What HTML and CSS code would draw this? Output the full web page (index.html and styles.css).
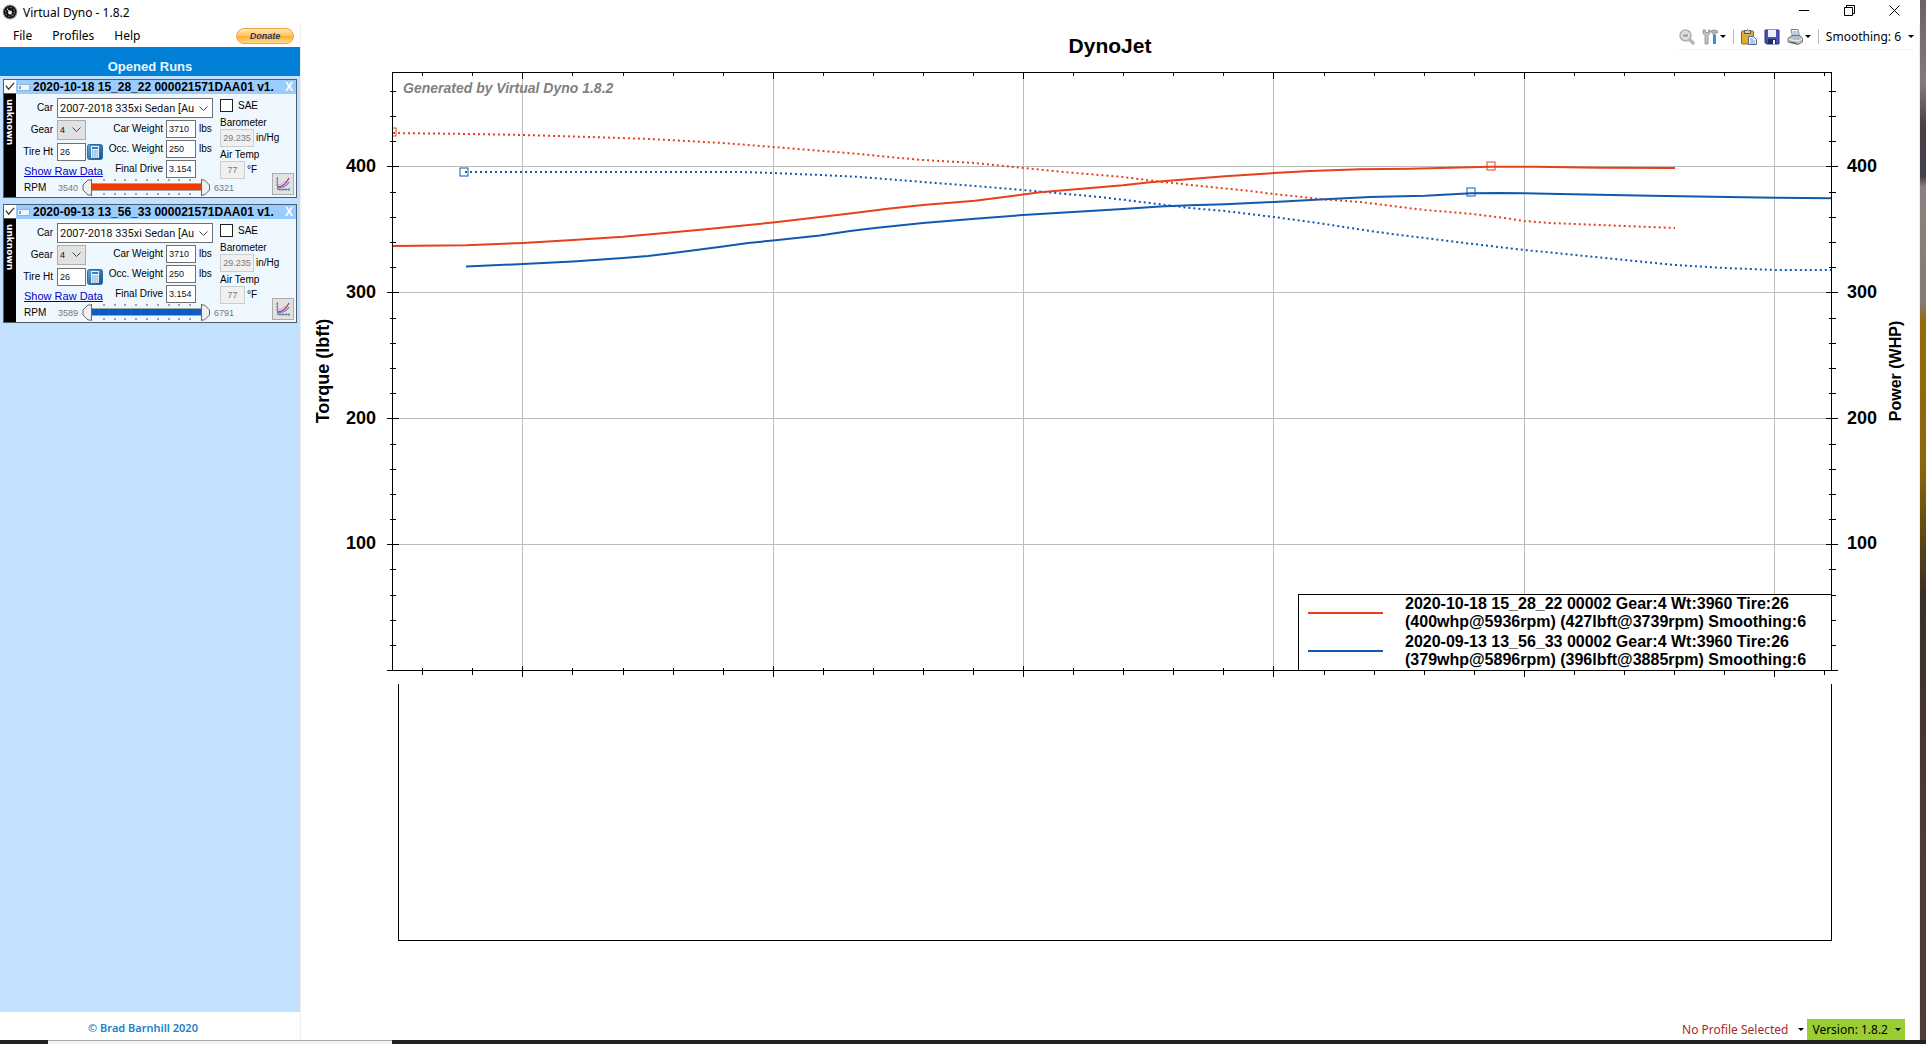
FILE: index.html
```html
<!DOCTYPE html>
<html lang="en">
<head>
<meta charset="utf-8">
<title>Virtual Dyno - 1.8.2</title>
<link rel="stylesheet" href="styles.css">
</head>
<body>
<svg class="defs" aria-hidden="true">
  <defs>
    <linearGradient id="calc-face" x1="0" y1="0" x2="1" y2="1"><stop offset="0" stop-color="#5fa8dc"/><stop offset="1" stop-color="#0d4f94"/></linearGradient>
    <symbol id="i-check" viewBox="0 0 13 13"><path d="M2 6l3 4 6-7" fill="none" stroke="#333" stroke-width="1.3"/></symbol>
    <symbol id="i-tag" viewBox="0 0 13 7"><rect x=".5" y=".5" width="12" height="6" fill="#eef6ff" stroke="#8fb4d8"/><rect x="2" y="2" width="2" height="3" fill="#6fa3d4"/></symbol>
    <symbol id="i-calc" viewBox="0 0 16 16"><rect x=".5" y=".5" width="15" height="15" rx="2" fill="url(#calc-face)" stroke="#2b6ba8"/><rect x="4" y="2" width="8" height="12" fill="#e6f2fb"/><path d="M5 4h6" stroke="#3b7fb8" stroke-width="2"/><path d="M5 7h6M5 9h6M5 11h6M5 13h6" stroke="#4a8fc8" stroke-dasharray="1.4 .9"/></symbol>
    <symbol id="i-graph" viewBox="0 0 16 16"><path d="M2.500 1v12.500H15M1 3h2M1 6h2M1 9h2M5 12v3M8 12v3M11 12v3M14 12v3" fill="none" stroke="#7c8494"/><path d="M3 11c5 0 8-3 11-9" fill="none" stroke="#c0306a" stroke-width="1.300"/><path d="M3 12c5-1 8-1 11-6" fill="none" stroke="#5a8ae8" stroke-width="1.300"/><path d="M3 9c4 0 5-3 8-4" fill="none" stroke="#d79ad8"/></symbol>
    <symbol id="i-down" viewBox="0 0 6 3"><path d="M0 0h6L3 3z"/></symbol>
    <symbol id="range" viewBox="0 0 129 18">
      <path d="M22 0v2M33 0v2M43 0v2M54 0v2M65 0v2M76 0v2M87 0v2M97 0v2M108 0v2M22 14v2M33 14v2M43 14v2M54 14v2M65 14v2M76 14v2M87 14v2M97 14v2M108 14v2" stroke="#555"/>
      <path d="M10 5h110M10 11h110" stroke="#555"/><path d="M10 8h110" stroke="currentColor" stroke-width="6"/>
      <path d="M9.500 0v17M9.500 1H6L1 6v5l5 5h3" fill="#f0f0f0" stroke="#666"/>
      <path d="M119.500 0v17M119.500 1h3l5 5v5l-5 5h-3" fill="#f0f0f0" stroke="#666"/>
    </symbol>
  </defs>
</svg>

<div class="app">
  <header class="titlebar">
    <svg class="logo" viewBox="0 0 16 16" aria-hidden="true"><circle cx="8" cy="8" r="7.500" fill="#aaa"/><circle cx="8" cy="8" r="6.500" fill="#151515"/><circle cx="8" cy="8" r="4.500" fill="none" stroke="#999" stroke-dasharray="1.500 2"/><path d="M8 8L5 5" stroke="#ddd"/><circle cx="8" cy="8.500" r="2" fill="#eee"/><path d="M9 11h3" stroke="#e33"/></svg>
    <h1>Virtual Dyno - 1.8.2</h1>
    <div class="controls">
      <button aria-label="Minimize"><svg viewBox="0 0 11 11"><path d="M0 5.500h10"/></svg></button>
      <button aria-label="Restore"><svg viewBox="0 0 11 11"><path d="M.5 2.500h8v8h-8zM2.500 2V.5h8v8H9"/></svg></button>
      <button aria-label="Close"><svg viewBox="0 0 11 11"><path d="M.5.5l10 10M10.500.5l-10 10"/></svg></button>
    </div>
  </header>

  <div class="content">
    <aside class="sidebar">
      <nav class="menu">
        <button>File</button><button>Profiles</button><button>Help</button>
        <button class="donate">Donate</button>
      </nav>
      <h2>Opened Runs</h2>
      <div class="runs">

        <section class="run">
          <header class="run-head">
            <label class="tick"><input type="checkbox" checked aria-label="Show run"><svg><use href="#i-check"/></svg></label>
            <svg class="tag-icon"><use href="#i-tag"/></svg>
            <h3>2020-10-18 15_28_22 000021571DAA01 v1.</h3>
            <button class="close" aria-label="Close run">X</button>
          </header>
          <div class="run-body">
            <div class="strip">unknown</div>
            <div class="settings">
              <div class="car"><label for="car1">Car</label><select id="car1" class="wide"><option>2007-2018 335xi Sedan [Automatic]</option></select></div>
              <div class="columns">
                <div class="gearing">
                  <div class="row"><label for="gear1">Gear</label><select id="gear1" class="gear"><option>4</option></select></div>
                  <div class="row"><label for="tire1">Tire Ht</label><input id="tire1" value="26"><button class="calc" aria-label="Tire calculator"><svg><use href="#i-calc"/></svg></button></div>
                  <a href="#raw1">Show Raw Data</a>
                </div>
                <div class="weights">
                  <label for="cw1">Car Weight</label><input id="cw1" value="3710"><span>lbs</span>
                  <label for="ow1">Occ. Weight</label><input id="ow1" value="250"><span>lbs</span>
                  <label for="fd1">Final Drive</label><input id="fd1" value="3.154">
                </div>
              </div>
              <div class="rpm"><span>RPM</span><output>3540</output>
                <div class="slider red"><svg><use href="#range"/></svg><input type="range" aria-label="Lowest RPM"><input type="range" aria-label="Highest RPM"></div>
                <output>6321</output></div>
            </div>
            <div class="weather">
              <div class="readings">
                <label class="sae"><input type="checkbox">SAE</label>
                <label for="baro1">Barometer</label>
                <div class="reading"><input id="baro1" class="baro" value="29.235" disabled><span>in/Hg</span></div>
                <label for="air1">Air Temp</label>
                <div class="reading"><input id="air1" class="air" value="77" disabled><span>°F</span></div>
              </div>
              <button class="graph" aria-label="Run graph"><svg><use href="#i-graph"/></svg></button>
            </div>
          </div>
        </section>

        <section class="run">
          <header class="run-head">
            <label class="tick"><input type="checkbox" checked aria-label="Show run"><svg><use href="#i-check"/></svg></label>
            <svg class="tag-icon"><use href="#i-tag"/></svg>
            <h3>2020-09-13 13_56_33 000021571DAA01 v1.</h3>
            <button class="close" aria-label="Close run">X</button>
          </header>
          <div class="run-body">
            <div class="strip">unknown</div>
            <div class="settings">
              <div class="car"><label for="car2">Car</label><select id="car2" class="wide"><option>2007-2018 335xi Sedan [Automatic]</option></select></div>
              <div class="columns">
                <div class="gearing">
                  <div class="row"><label for="gear2">Gear</label><select id="gear2" class="gear"><option>4</option></select></div>
                  <div class="row"><label for="tire2">Tire Ht</label><input id="tire2" value="26"><button class="calc" aria-label="Tire calculator"><svg><use href="#i-calc"/></svg></button></div>
                  <a href="#raw2">Show Raw Data</a>
                </div>
                <div class="weights">
                  <label for="cw2">Car Weight</label><input id="cw2" value="3710"><span>lbs</span>
                  <label for="ow2">Occ. Weight</label><input id="ow2" value="250"><span>lbs</span>
                  <label for="fd2">Final Drive</label><input id="fd2" value="3.154">
                </div>
              </div>
              <div class="rpm"><span>RPM</span><output>3589</output>
                <div class="slider blue"><svg><use href="#range"/></svg><input type="range" aria-label="Lowest RPM"><input type="range" aria-label="Highest RPM"></div>
                <output>6791</output></div>
            </div>
            <div class="weather">
              <div class="readings">
                <label class="sae"><input type="checkbox">SAE</label>
                <label for="baro2">Barometer</label>
                <div class="reading"><input id="baro2" class="baro" value="29.235" disabled><span>in/Hg</span></div>
                <label for="air2">Air Temp</label>
                <div class="reading"><input id="air2" class="air" value="77" disabled><span>°F</span></div>
              </div>
              <button class="graph" aria-label="Run graph"><svg><use href="#i-graph"/></svg></button>
            </div>
          </div>
        </section>
      </div>
      <footer class="credit">© Brad Barnhill 2020</footer>
    </aside>

    <main class="main">
      <div class="main-head">
        <h2>DynoJet</h2>
        <div class="toolbar">
          <button aria-label="Zoom out"><svg class="icon" viewBox="0 0 16 16"><path d="M10 10l4 4" stroke="#b5b5b5" stroke-width="3.500" stroke-linecap="round"/><circle cx="6.500" cy="6.500" r="5.500" fill="#ddd" stroke="#b0b0b0" stroke-width="1.500"/><path d="M4 6.500h5" stroke="#999" stroke-width="2"/></svg></button>
          <button class="tools" aria-label="Tools"><svg class="icon" viewBox="0 0 16 16"><path d="M1 1v3.500L3 6.500V15h3V6.500l2-2V1L6.500 1v2.500h-3V1z" fill="#c4c8cc" stroke="#85898d" stroke-width=".8"/><path d="M8.500 2.500Q11-.5 15.500 2v2H13v2h-2V4z" fill="#b4b8bc" stroke="#75797d" stroke-width=".6"/><path d="M11 6h3v9h-3z" fill="#2196f3"/></svg><svg class="down"><use href="#i-down"/></svg></button>
          <i class="sep"></i>
          <button aria-label="Paste"><svg class="icon" viewBox="0 0 16 16"><rect x=".5" y="2" width="12" height="13" rx="1" fill="#e3ac2c" stroke="#916414"/><path d="M3.500 4.500v-3h2l1-1 1 1h2v3z" fill="#c8ccd2" stroke="#555"/><path d="M7.500 7.500h5l3 3v5h-8z" fill="#f2f7ff" stroke="#51698e"/><path d="M9 10h3M9 12h5M9 14h5" stroke="#7898c4"/></svg></button>
          <button aria-label="Save"><svg class="icon" viewBox="0 0 16 16"><path d="M1 1h14v14H2.500L1 13.500z" fill="#4550b8" stroke="#29307c"/><path d="M4 1h8v7H4z" fill="#edf1fb"/><path d="M4 10h8v5H4z" fill="#262b5c"/><path d="M9 11h2v4H9z" fill="#fff"/></svg></button>
          <button class="print" aria-label="Print"><svg class="icon" viewBox="0 0 16 16"><path d="M4 .5h7l1.500 7h-7z" fill="#f3f7ff" stroke="#7d8799"/><path d="M5.500 3h5M6 5h5" stroke="#87a3d3"/><path d="M1 9.500l4-3h8l2.500 3V13L11 15.500 1 13z" fill="#b9bdc3" stroke="#6f747c"/><path d="M2 10.500l9 1.500 4-2" fill="none" stroke="#f5f5f5"/><path d="M3 13l7 1.500" stroke="#555"/></svg><svg class="down"><use href="#i-down"/></svg></button>
          <i class="sep"></i>
          <button class="smoothing">Smoothing: 6<svg class="down"><use href="#i-down"/></svg></button>
        </div>
      </div>

      <svg class="chart" viewBox="301 62 1618 890" role="img" aria-label="Torque and power against engine speed">
        <clipPath id="plot"><rect x="393" y="72" width="1439" height="599"/></clipPath>
        <g class="lines" transform="translate(.5 .5)">
          <path class="grid" d="M393 166H1831M393 292H1831M393 418H1831M393 544H1831M522 72V670M773 72V670M1023 72V670M1273 72V670M1524 72V670M1774 72V670"/>
          <path d="M392 72H1831V670H392z"/>
          <path d="M386 166h12M386 292h12M386 418h12M386 544h12M386 670h12M1825 166h12M1825 292h12M1825 418h12M1825 544h12M1825 670h12"/>
          <path d="M389 91h6m-6 25h6m-6 25h6M389 192h6m-6 25h6m-6 25h6m-6 25h6M389 318h6m-6 25h6m-6 25h6m-6 25h6M389 444h6m-6 25h6m-6 25h6m-6 25h6M389 569h6m-6 26h6m-6 25h6m-6 25h6"/>
          <path d="M1828 91h7m-7 25h7m-7 25h7M1828 192h7m-7 25h7m-7 25h7m-7 25h7M1828 318h7m-7 25h7m-7 25h7m-7 25h7M1828 444h7m-7 25h7m-7 25h7m-7 25h7M1828 569h7m-7 26h7m-7 25h7m-7 25h7"/>
          <path d="M522 72v6M773 72v6M1023 72v6M1273 72v6M1524 72v6M1774 72v6M522 665v11M773 665v11M1023 665v11M1273 665v11M1524 665v11M1774 665v11"/>
          <path d="M422 72v3m50-3v3m100-3v3m51-3v3m50-3v3m50-3v3m100-3v3m50-3v3m50-3v3m50-3v3m100-3v3m50-3v3m50-3v3m50-3v3m101-3v3m50-3v3m50-3v3m50-3v3m100-3v3m50-3v3m50-3v3m50-3v3m100-3v3"/>
          <path d="M422 667v7m50-7v7m100-7v7m51-7v7m50-7v7m50-7v7m100-7v7m50-7v7m50-7v7m50-7v7m100-7v7m50-7v7m50-7v7m50-7v7m101-7v7m50-7v7m50-7v7m50-7v7m100-7v7m50-7v7m50-7v7m50-7v7m100-7v7"/>
          <path d="M398 683V940H1831V683"/>
        </g>
        <g class="curves" clip-path="url(#plot)">
          <polyline class="red dots" points="393,133 470,134 523,135 590,137 650,139 723,143 773,147 860,154 900,158 923,160 975,163 1023,168 1075,173 1123,177 1155,181 1200,186 1250,191 1274,194 1320,199 1360,202 1400,207 1425,210 1473,214 1505,218 1524,221 1550,223 1600,225 1650,227 1675,228"/>
          <polyline class="blue dots" points="465,172 740,172 773,173 820,175 860,177 923,182 975,186 1023,190 1100,197 1150,203 1190,208 1225,211 1274,217 1325,224 1370,231 1400,235 1425,238 1473,244 1524,250 1575,255 1625,260 1675,265 1725,268 1775,270 1831,270"/>
          <polyline class="blue" points="466,266.500 523,264 573,261.500 623,258 648,256 673,253 723,246.500 748,243 773,240.500 820,235.500 850,231 875,228 923,223 975,218.700 1023,215 1073,212 1123,209 1160,206.500 1190,205.300 1225,204.300 1274,202 1325,199.300 1370,197 1425,195.700 1471,193.300 1500,193 1524,193.300 1560,194 1650,195.700 1775,197.700 1831,198.300"/>
          <polyline class="red" points="393,246 466,245.300 523,243 573,240 623,236.700 698,230 773,222.500 850,213.500 890,208.500 923,205 975,200.700 1023,194.500 1040,192.300 1123,185.300 1150,182.300 1225,176.300 1274,173 1310,171 1360,169.300 1410,168.700 1470,167.300 1491,166.700 1535,166.700 1600,167.700 1675,168"/>
          <rect class="red mark" x="388" y="128" width="8" height="8"/>
          <rect class="blue mark" x="460" y="168" width="8" height="8"/>
          <rect class="red mark" x="1487" y="162" width="8" height="8"/>
          <rect class="blue mark" x="1467" y="188" width="8" height="8"/>
        </g>
        <text class="watermark" x="403" y="93">Generated by Virtual Dyno 1.8.2</text>
        <g class="scale" text-anchor="end"><text x="376" y="172">400</text><text x="376" y="298">300</text><text x="376" y="424">200</text><text x="376" y="549">100</text></g>
        <g class="scale"><text x="1847" y="172">400</text><text x="1847" y="298">300</text><text x="1847" y="424">200</text><text x="1847" y="549">100</text></g>
        <text class="scale" text-anchor="middle" transform="translate(329 371) rotate(-90)">Torque (lbft)</text>
        <text class="legend-text" text-anchor="middle" transform="translate(1901 371) rotate(-90)">Power (WHP)</text>
        <g class="lines" transform="translate(.5 .5)"><rect class="legend-box" x="1298" y="594" width="533" height="76"/></g>
        <path class="red key" d="M1308 613h75"/><path class="blue key" d="M1308 651h75"/>
        <g class="legend-text">
          <text x="1405" y="609">2020-10-18 15_28_22 00002 Gear:4 Wt:3960 Tire:26</text>
          <text x="1405" y="627">(400whp@5936rpm) (427lbft@3739rpm) Smoothing:6</text>
          <text x="1405" y="647">2020-09-13 13_56_33 00002 Gear:4 Wt:3960 Tire:26</text>
          <text x="1405" y="665">(379whp@5896rpm) (396lbft@3885rpm) Smoothing:6</text>
        </g>
      </svg>

      <footer class="status">
        <button class="profile">No Profile Selected<svg class="down"><use href="#i-down"/></svg></button>
        <button class="version">Version: 1.8.2<svg class="down"><use href="#i-down"/></svg></button>
      </footer>
    </main>
  </div>
</div>
<div class="desktop"></div>
<div class="taskbar"><div class="task"></div></div>
</body>
</html>
```
FILE: styles.css
```css
* { box-sizing: border-box; }

body {
  margin: 0;
  min-height: 100vh;
  display: grid;
  grid-template-columns: 1fr 6px;
  grid-template-rows: 1fr 4px;
  background: #fff;
  color: #000;
  font-family: "Liberation Sans", Arial, sans-serif;
}

h1, h2, h3 { margin: 0; }

button {
  margin: 0;
  padding: 0;
  border: 0;
  background: none;
  color: inherit;
  font: inherit;
}

.defs { position: absolute; width: 0; height: 0; }

.app { display: flex; flex-direction: column; min-width: 0; }

.desktop {
  background: linear-gradient(#6b6267, #837a7c 8%, #4a4148 12%, #45404a 17%, #8a8280 18%, #857a74 29%, #94690f 31%, #8a660f 45%, #66500f 50%, #3c2e26 57%, #4c3b33 80%, #4d3c36);
}

.taskbar { grid-column: 1 / -1; padding-left: 48px; background: #231f1d; }
.task { width: 344px; height: 4px; background: #f1f1f1; border-top: 1px solid #aaa; }

/* Title bar */
.titlebar {
  display: flex;
  align-items: center;
  height: 24px;
  padding: 0 3px 0 2px;
  gap: 5px;
  font-family: "Noto Sans", "Open Sans", sans-serif;
}
.titlebar h1 { font-size: 12px; font-weight: 400; }
.logo { width: 16px; height: 16px; }
.controls { display: flex; margin-left: auto; align-self: flex-start; }
.controls button { width: 45px; height: 21px; display: grid; place-items: center; }
.controls svg { width: 11px; height: 11px; fill: none; stroke: #000; }

.content { flex: 1; display: flex; }

/* Sidebar */
.sidebar { flex: none; width: 300px; display: flex; flex-direction: column; }

.menu {
  display: flex;
  align-items: center;
  height: 23px;
  padding: 0 6px 0 13px;
  gap: 20px;
  font: 12px "Noto Sans", "Open Sans", sans-serif;
}
.menu .donate {
  width: 58px;
  height: 16px;
  margin-left: auto;
  border: 1px solid #f0a63c;
  border-radius: 8px;
  background: linear-gradient(#ffe9b8, #ffc35c 50%, #ffae2e 52%, #ffd98a);
  color: #253b6b;
  font: italic bold 9px/14px "Liberation Sans", Arial, sans-serif;
}

.sidebar h2 {
  height: 29px;
  padding-top: 5px;
  background: #0080d7;
  color: #e9f8ff;
  font-size: 13px;
  line-height: 30px;
  text-align: center;
}

.runs {
  flex: 1;
  display: flex;
  flex-direction: column;
  gap: 6px;
  padding: 3px;
  background: #c2e0ff;
}
.run { border: 1px solid #4e5d6c; background: #f0f8ff; font-size: 10px; line-height: 12px; }

.run-head { display: flex; align-items: center; height: 14px; background: #99ccff; }
.run-head h3 {
  flex: 1;
  min-width: 0;
  margin-left: 3px;
  white-space: nowrap;
  font-size: 12px;
  line-height: 14px;
}
.tick { position: relative; width: 12px; height: 14px; background: #fff; border-bottom: 1px solid #555; }
.tick input { position: absolute; inset: 0; margin: 0; opacity: 0; }
.tick svg { display: block; width: 12px; height: 12px; }
.tag-icon { width: 13px; height: 7px; margin-left: 1px; }
.run-head .close { width: 14px; color: #fff; font-size: 12px; font-weight: 700; line-height: 14px; }

.run-body { display: flex; height: 103px; }
.strip {
  flex: none;
  width: 12px;
  padding-top: 5px;
  background: #000;
  color: #fff;
  writing-mode: vertical-rl;
  font: bold 9px/12px "DejaVu Sans", sans-serif;
}

.settings { flex: none; width: 201px; padding-top: 4px; }
.run input, .run select {
  height: 18px;
  margin: 0;
  padding: 0 2px;
  border: 1px solid #707070;
  border-radius: 0;
  background: #fff;
  color: #111;
  font: 9px "Liberation Sans", Arial, sans-serif;
}
.run select {
  appearance: none;
  background: #fff url("data:image/svg+xml,%3Csvg xmlns='http://www.w3.org/2000/svg' width='9' height='5'%3E%3Cpath d='M.5.5l4 4 4-4' fill='none' stroke='%23444'/%3E%3C/svg%3E") no-repeat right 4px center;
}

.car { display: flex; align-items: center; gap: 4px; }
.car label { width: 37px; text-align: right; }
.run .wide { width: 156px; height: 20px; padding-right: 18px; font: 11px Roboto, "Liberation Sans", sans-serif; }

.columns { display: flex; justify-content: space-between; padding: 2px 5px 0 0; }
.gearing { display: flex; flex-direction: column; gap: 3px; }
.row { display: flex; align-items: center; height: 19px; }
.row label { width: 37px; margin-right: 4px; text-align: right; }
.row input { width: 29px; }
.run .gear { width: 29px; height: 20px; border-color: #adadad; background-color: #e1e1e1; }
.calc { width: 16px; height: 16px; margin-left: 1px; }
.calc svg, .graph svg { display: block; width: 16px; height: 16px; }
.gearing a { margin-left: 8px; color: #00c; font-size: 11px; line-height: 15px; }

.weights {
  display: grid;
  grid-template-columns: auto 30px 13px;
  grid-auto-rows: 18px;
  align-items: center;
  gap: 2px 3px;
}
.weights label { text-align: right; }

.rpm { display: flex; align-items: center; height: 18px; padding-left: 8px; white-space: nowrap; }
.rpm > * { flex: none; }
.rpm span { width: 34px; }
.rpm output { width: 21px; color: #777; font-size: 9px; }
.slider { position: relative; width: 129px; height: 18px; margin: 0 3px; display: flex; }
.slider svg { position: absolute; inset: 0; width: 129px; height: 18px; }
.slider.red { color: #f33b00; }
.slider.blue { color: #0a5cc0; }
.slider input { flex: 1; min-width: 0; opacity: 0; }

.weather { flex: 1; display: grid; padding: 5px 2px 2px 3px; }
.weather > * { grid-area: 1 / 1; }
.readings { display: flex; flex-direction: column; align-items: flex-start; }
.sae { display: flex; align-items: center; gap: 5px; margin-bottom: 5px; }
.run .sae input { appearance: none; width: 13px; height: 13px; border-color: #222; }
.reading { display: flex; align-items: center; gap: 2px; margin-bottom: 2px; }
.run .reading input { border-color: #ccc; background: #f0f0f0; color: #7a7a7a; text-align: center; }
.run .baro { width: 34px; }
.run .air { width: 25px; }
.graph {
  width: 22px;
  height: 22px;
  place-self: end;
  display: grid;
  place-items: center;
  border: 1px solid #adadad;
  background: #e1e1e1;
}

.credit {
  height: 28px;
  padding-right: 14px;
  color: #1a7fcb;
  font: 600 11px/32px "Noto Sans", "Open Sans", sans-serif;
  text-align: center;
}

/* Main area */
.main {
  flex: 1;
  min-width: 0;
  display: flex;
  flex-direction: column;
  border: solid #eee;
  border-width: 0 1px;
}
.main-head { display: grid; grid-template-columns: 1fr auto 1fr; height: 38px; padding: 0 5px; }
.main-head h2 { grid-column: 2; font-size: 21px; line-height: 44px; }

.toolbar {
  justify-self: end;
  display: flex;
  align-items: center;
  height: 26px;
  gap: 7px;
  border-bottom: 1px solid #f0f0f0;
  font: 12px "Noto Sans", "Open Sans", sans-serif;
}
.toolbar button { display: flex; align-items: center; gap: 2px; white-space: nowrap; }
.icon { width: 16px; height: 16px; }
.down { width: 6px; height: 3px; }
.sep { width: 1px; height: 15px; background: #bbb; }
.toolbar .smoothing { gap: 7px; }

.chart { display: block; width: 100%; height: auto; font-weight: 700; }
.lines { fill: none; stroke: #000; shape-rendering: crispEdges; }
.grid { stroke: #bcbcbc; }
.curves { fill: none; stroke-width: 2; }
.red { stroke: #e8401c; }
.blue { stroke: #1259b0; }
.dots { stroke-dasharray: 2 3; }
.mark { stroke-width: 1; }
.key { stroke-width: 2; }
.legend-box { fill: #fff; }
.legend-text { font-size: 16px; }
.scale { font-size: 18px; }
.watermark { fill: #808080; font-size: 14px; font-style: italic; }

.status {
  display: flex;
  justify-content: flex-end;
  margin-top: auto;
  padding-right: 14px;
  gap: 3px;
  font: 12px "Noto Sans", "Open Sans", sans-serif;
}
.status button { display: flex; align-items: center; height: 21px; }
.profile { gap: 10px; color: #a52a2a; }
.profile svg { fill: #000; }
.status .version { gap: 7px; padding: 0 4px 0 5px; background: #9acd32; }
```
